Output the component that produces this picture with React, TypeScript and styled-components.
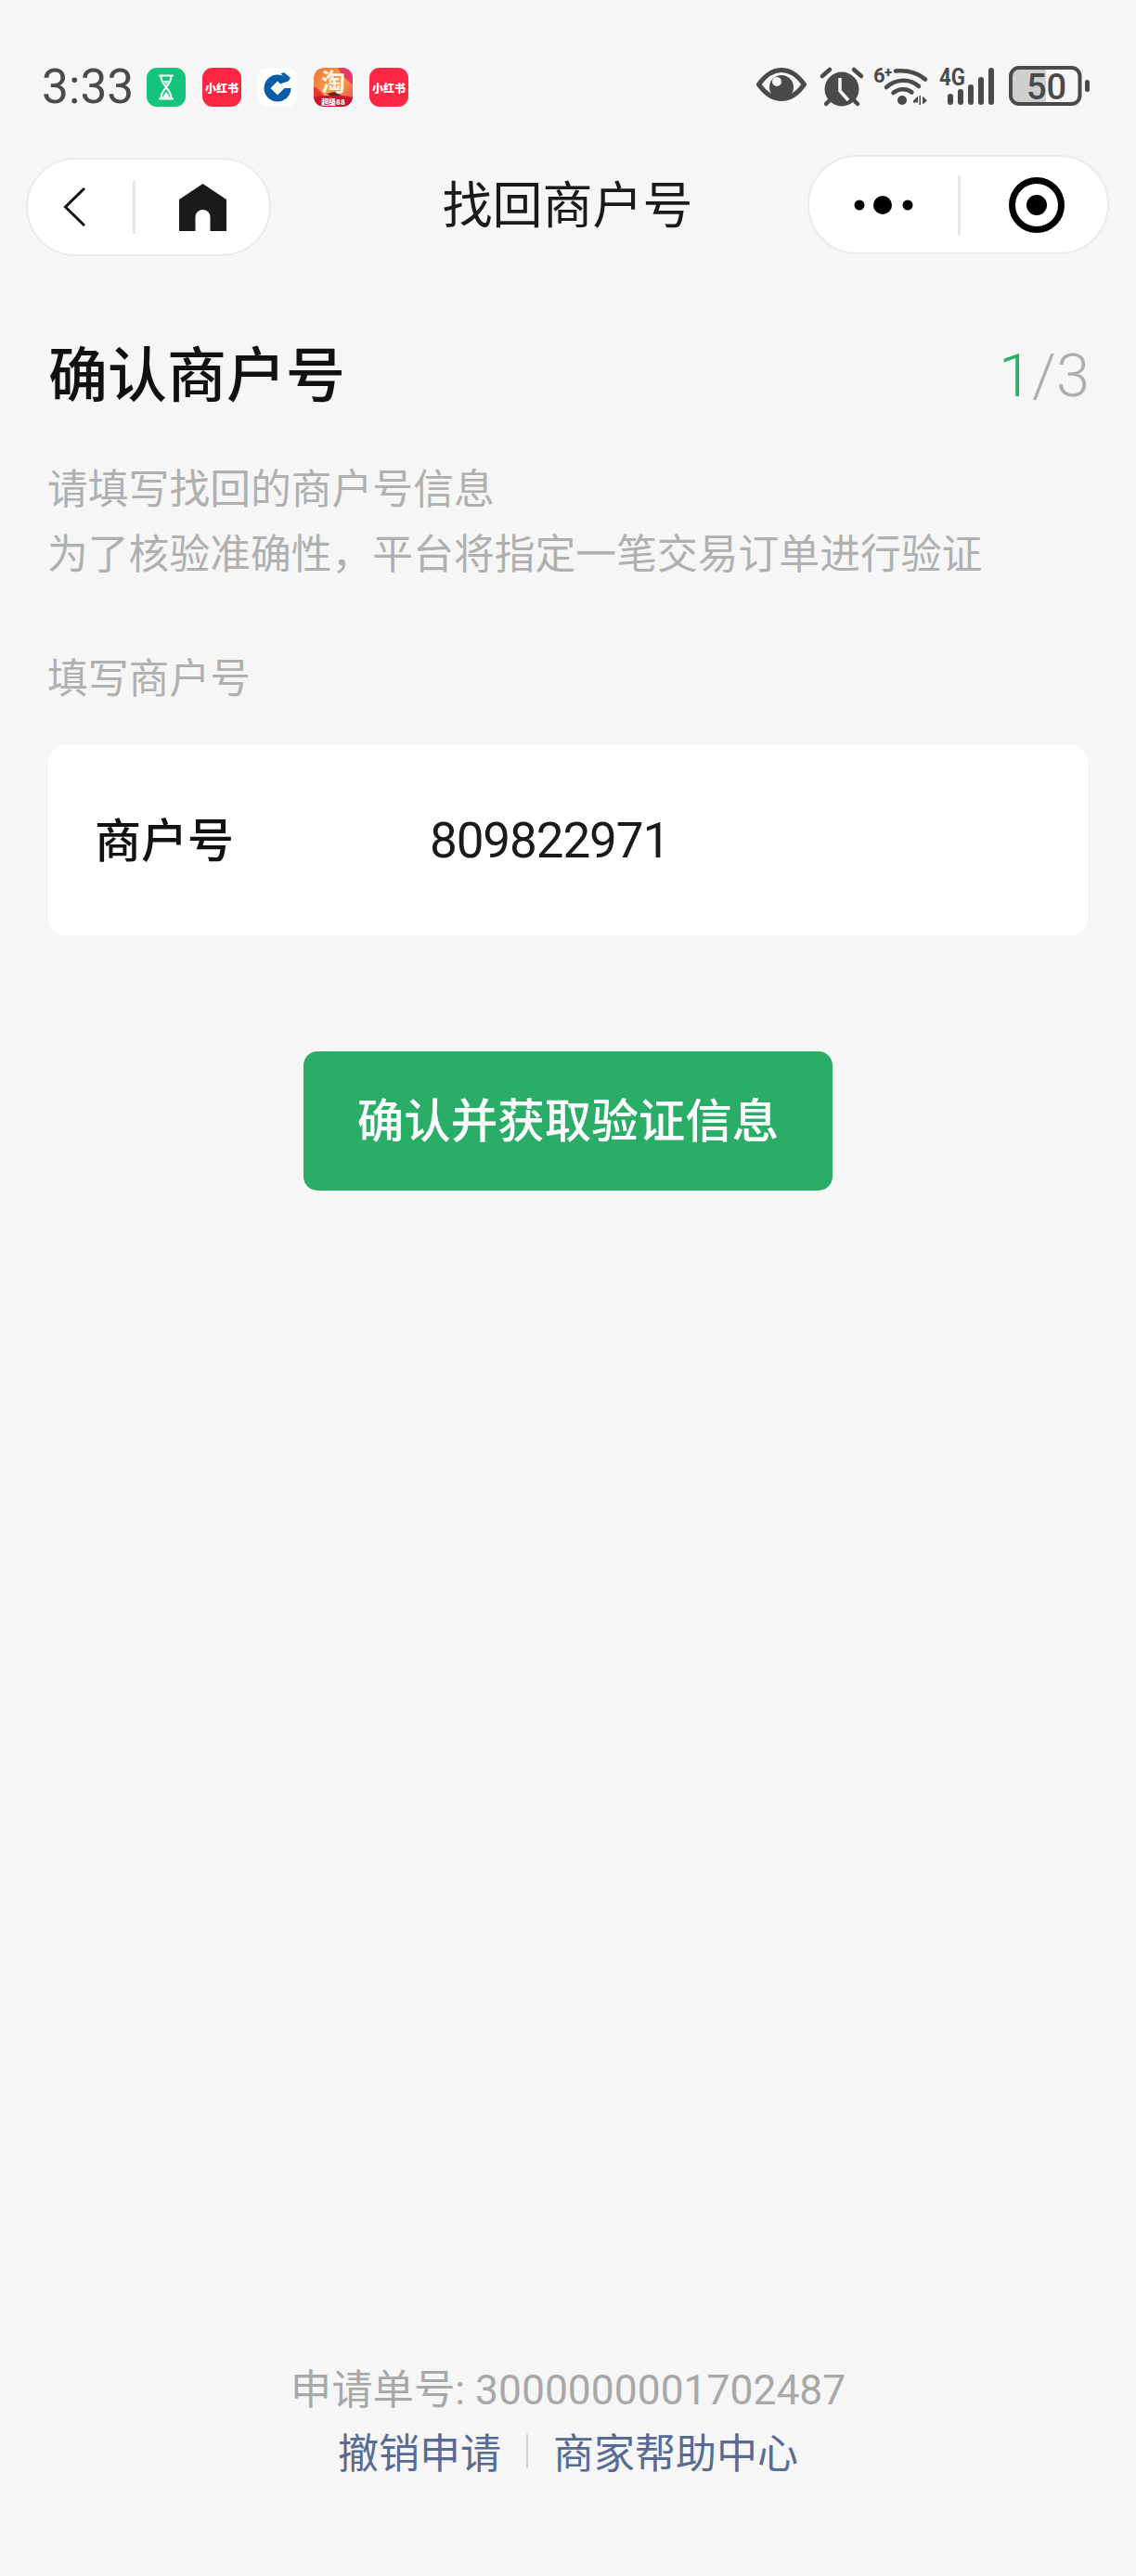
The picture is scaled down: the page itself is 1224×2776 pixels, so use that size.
import React from "react";
import styled, { createGlobalStyle } from "styled-components";

const CN = `"Noto Sans CJK SC", "Noto Sans", sans-serif`;

const Global = createGlobalStyle`
  html, body { margin: 0; padding: 0; background: #f6f6f6; }
  body { font-family: ${CN}; }
`;

const Page = styled.div`
  width: 1224px;
  height: 2776px;
  background: #f6f6f6;
  display: flex;
  flex-direction: column;
  overflow: hidden;
`;

const StatusBar = styled.div`
  height: 48px;
  margin-top: 70px;
  padding: 0 48px 0 45px;
  display: flex;
  align-items: center;
  justify-content: space-between;
`;

const StatusLeft = styled.div`
  display: flex;
  align-items: center;
`;

const Clock = styled.span`
  font-family: "Roboto", sans-serif;
  font-size: 51.5px;
  line-height: 48px;
  color: #4a4a4a;
  width: 113px;
`;

const AppIcons = styled.div`
  display: flex;
  gap: 18px;
  align-items: center;
`;

const AppIcon = styled.div<{ $bg: string }>`
  width: 42px;
  height: 42px;
  border-radius: 11px;
  background: ${(p) => p.$bg};
  color: #fff;
  font-size: 12px;
  font-weight: 900;
  display: flex;
  align-items: center;
  justify-content: center;
  overflow: hidden;
  white-space: nowrap;
`;

const NavBar = styled.div`
  height: 109px;
  margin-top: 49px;
  padding: 0 29px 0 28px;
  display: grid;
  grid-template-columns: 1fr auto 1fr;
  align-items: center;
`;

const Capsule = styled.div<{ $w: number; $h: number; $side: "left" | "right" }>`
  width: ${(p) => p.$w}px;
  height: ${(p) => p.$h}px;
  box-sizing: border-box;
  background: #fff;
  border: 2px solid #ebebeb;
  border-radius: 54px;
  display: flex;
  align-items: center;
  justify-self: ${(p) => (p.$side === "left" ? "start" : "end")};
  align-self: ${(p) => (p.$side === "left" ? "end" : "start")};
`;

const FirstSlot = styled.div<{ $w: number; $pr: number }>`
  width: ${(p) => p.$w}px;
  padding-right: ${(p) => p.$pr}px;
  box-sizing: border-box;
  display: flex;
  align-items: center;
  justify-content: center;
`;

const LastSlot = styled.div<{ $pl: number }>`
  flex: 1;
  padding-left: ${(p) => p.$pl}px;
  display: flex;
  align-items: center;
  justify-content: center;
`;

const CapsuleLine = styled.div<{ $h: number }>`
  width: 3px;
  height: ${(p) => p.$h}px;
  background: #e6e6e6;
`;

const NavTitle = styled.div`
  font-size: 54px;
  line-height: 60px;
  padding-bottom: 7px;
  color: #1a1a1a;
`;

const Content = styled.div`
  flex: 1;
  padding: 0 52px;
  display: flex;
  flex-direction: column;
`;

const HeadRow = styled.div`
  margin-top: 83px;
  display: flex;
  justify-content: space-between;
  align-items: center;
  height: 84px;
`;

const Heading = styled.h1`
  margin: 0;
  padding-bottom: 3px;
  font-size: 64px;
  line-height: 81px;
  font-weight: 500;
  color: #111;
`;

const Steps = styled.div`
  font-family: "Roboto", sans-serif;
  font-size: 65px;
  font-weight: 300;
  padding-top: 8px;
  margin-right: -2px;
  color: #aeaeae;
`;

const StepNow = styled.span`
  color: #2aae67;
  font-weight: 300;
`;

const Intro = styled.p`
  margin: 46px 0 0 -1px;
  font-size: 43.8px;
  line-height: 70px;
  color: #b0b0b0;
`;

const FieldLabel = styled.div`
  margin: 69px 0 0 -1px;
  font-size: 43.8px;
  line-height: 60px;
  color: #b0b0b0;
`;

const Card = styled.div`
  margin-top: 45px;
  height: 205px;
  background: #fff;
  border-radius: 18px;
  padding: 0 50px;
  display: flex;
  align-items: center;
`;

const CardLabel = styled.div`
  width: 361px;
  padding-bottom: 8px;
  font-size: 50px;
  font-weight: 500;
  color: #111;
`;

const CardValue = styled.div`
  font-family: "Roboto", sans-serif;
  font-size: 53px;
  letter-spacing: -1.1px;
  color: #1a1a1a;
`;

const Submit = styled.button`
  align-self: center;
  margin-top: 125px;
  width: 570px;
  height: 150px;
  padding: 0 0 9px;
  border: none;
  border-radius: 15px;
  background: #2aae67;
  color: #fff;
  font-family: ${CN};
  font-size: 50.5px;
  font-weight: 500;
`;

const Footer = styled.div`
  margin-top: auto;
  margin-bottom: 102px;
  display: flex;
  flex-direction: column;
  align-items: center;
`;

const OrderNo = styled.div`
  font-size: 44.4px;
  line-height: 64px;
  color: #a8a8a8;
  font-family: "Roboto", ${CN};
`;

const Links = styled.div`
  display: flex;
  align-items: center;
  height: 66px;
`;

const FooterLink = styled.a`
  font-size: 44px;
  color: #576b95;
`;

const LinkSep = styled.div`
  width: 2px;
  height: 36px;
  margin: 0 27px;
  background: #cfcfcf;
`;

const Hourglass = () => (
  <svg width="18" height="28" viewBox="0 0 18 28" fill="none" stroke="#fff" strokeWidth="2" strokeLinecap="round">
    <path d="M2 1.5h14M2 26.500h14" />
    <path d="M3.500 2c0 6 3 8.500 5.500 12C6.500 17.500 3.500 20 3.500 26M14.500 2c0 6-3 8.500-5.500 12 2.500 3.500 5.500 6 5.500 12" />
    <path d="M6 7h6l-3 4zM4.500 25.500l4.500-6.500 4.500 6.500z" fill="#fff" stroke="none" />
  </svg>
);

const CcbLogo = () => (
  <svg width="42" height="42" viewBox="0 0 42 42">
    <circle cx="21" cy="22" r="14.5" fill="#0a5ba8" />
    <path d="M13.500 22 21 14.500 28.500 22 21 29.500z" fill="#fff" />
    <path d="M24 17.500 42 11v11H28z" fill="#fff" />
    <path d="M21 3 37 16l1-6-8-7z" fill="#fff" />
    <path d="M24.500 6.500 28 5l7 6-2 3z" fill="#0a5ba8" />
  </svg>
);

const TaobaoIcon = () => (
  <svg width="42" height="42" viewBox="0 0 42 42">
    <defs>
      <linearGradient id="tb" x1="0" y1="0" x2="1" y2="1">
        <stop offset="0" stopColor="#f2762c" />
        <stop offset="0.55" stopColor="#f4a04c" />
        <stop offset="1" stopColor="#e8405a" />
      </linearGradient>
    </defs>
    <rect width="42" height="42" rx="10" fill="url(#tb)" />
    <path d="M26 0h8c5 0 8 3 8 8v10C36 14 30 8 26 0z" fill="#e8386a" />
    <path d="M0 20c6 3 10 8 12 12H0z" fill="#e5392f" />
    <path d="M14 28l8-2 8 4-9 2z" fill="#5c2a1c" />
    <path d="M0 32c12-3 30-3 42 0 0 6-4 10-10 10H10C4 42 0 38 0 32z" fill="#d0112b" />
    <text x="21" y="25" fontSize="26" fontWeight="700" fill="#fff3e4" textAnchor="middle" fontFamily="Noto Sans CJK SC">淘</text>
    <text x="21" y="40" fontSize="8" fill="#fff" textAnchor="middle" fontFamily="Noto Sans CJK SC">超级88</text>
  </svg>
);

const SystemIcons = () => (
  <svg width="361" height="48" viewBox="815 70 361 48" fill="none">
    {/* eye */}
    <path d="M817.500 91C826 79 834 75.500 842 75.500S858 79 866.500 91C858 103 850 106.500 842 106.500S826 103 817.500 91z" stroke="#4a4a4a" strokeWidth="5" strokeLinejoin="round" />
    <circle cx="842" cy="94" r="13" fill="#4a4a4a" />
    <circle cx="837" cy="88" r="5" fill="#f6f6f6" />
    {/* alarm */}
    <circle cx="907" cy="96" r="18.500" fill="#4a4a4a" />
    <path d="M886 82l8-7M920 75l8 7M890 112l5-5M919 107l5 5" stroke="#4a4a4a" strokeWidth="4.500" strokeLinecap="round" />
    <path d="M905 84v14l9 10" stroke="#f6f6f6" strokeWidth="3.500" />
    {/* wifi */}
    <text x="941" y="89" fontSize="22" fontWeight="700" fill="#4a4a4a" fontFamily="Roboto">6</text>
    <text x="953" y="83" fontSize="15" fontWeight="900" fill="#4a4a4a" fontFamily="Roboto">+</text>
    <path d="M965 76.500c13-1 24 2 32 9M955 94c10-9 25-10 35-1M962.500 100c6-5 15-5 20-.5" stroke="#4a4a4a" strokeWidth="4.500" strokeLinecap="round" />
    <circle cx="972" cy="108" r="5" fill="#4a4a4a" />
    <path d="M984 108.500l5-5v7h-5zM990.500 103v10h1.500v-10zM994 103.500l5 5-5 4z" fill="#4a4a4a" />
    {/* signal */}
    <text x="1012" y="91.500" fontSize="25" fontWeight="700" fill="#4a4a4a" fontFamily="Roboto" textLength="28" lengthAdjust="spacingAndGlyphs">4G</text>
    <g stroke="#4a4a4a" strokeWidth="6" strokeLinecap="round">
      <path d="M1024 104v6M1035 99v11M1046 94v16M1057 86v24M1068 76v34" />
    </g>
    {/* battery */}
    <path d="M1095 73h32v39h-32c-4 0-6-2-6-6V79c0-4 2-6 6-6z" fill="#cfcfcf" />
    <rect x="1089" y="73" width="74.500" height="39" rx="9" stroke="#4a4a4a" strokeWidth="4" />
    <text x="1106" y="107" fontSize="38" fontWeight="500" fill="#4a4a4a" fontFamily="Roboto">50</text>
    <rect x="1169" y="86" width="5" height="13" rx="2.500" fill="#4a4a4a" />
  </svg>
);

const BackIcon = () => (
  <svg width="24" height="42" viewBox="0 0 24 42" fill="none">
    <path d="M23 1 2.500 21 23 41" stroke="#111" strokeWidth="3" />
  </svg>
);

const HomeIcon = () => (
  <svg width="51" height="51" viewBox="0 0 51 51">
    <path d="M25.500 0 51 17V51H33.500V36a8 8 0 0 0-16 0V51H0V17z" fill="#1a1a1a" />
  </svg>
);

const MoreIcon = () => (
  <svg width="64" height="20" viewBox="0 0 64 20">
    <circle cx="6" cy="10" r="5.500" fill="#000" />
    <circle cx="31" cy="10" r="10" fill="#000" />
    <circle cx="58" cy="10" r="5.500" fill="#000" />
  </svg>
);

const TargetIcon = () => (
  <svg width="60" height="60" viewBox="0 0 60 60" fill="none">
    <circle cx="30" cy="30" r="26.500" stroke="#000" strokeWidth="7" />
    <circle cx="30" cy="30" r="11" fill="#000" />
  </svg>
);

export default function App() {
  return (
    <Page>
      <Global />
      <StatusBar>
        <StatusLeft>
          <Clock>3:33</Clock>
          <AppIcons>
            <AppIcon $bg="#14c47c"><Hourglass /></AppIcon>
            <AppIcon $bg="#fb2743">小红书</AppIcon>
            <AppIcon $bg="#ffffff"><CcbLogo /></AppIcon>
            <AppIcon $bg="transparent"><TaobaoIcon /></AppIcon>
            <AppIcon $bg="#fb2743">小红书</AppIcon>
          </AppIcons>
        </StatusLeft>
        <SystemIcons />
      </StatusBar>
      <NavBar>
        <Capsule $w={264} $h={106} $side="left">
          <FirstSlot $w={113} $pr={14}><BackIcon /></FirstSlot>
          <CapsuleLine $h={57} />
          <LastSlot $pl={0}><HomeIcon /></LastSlot>
        </Capsule>
        <NavTitle>找回商户号</NavTitle>
        <Capsule $w={325} $h={107} $side="right">
          <FirstSlot $w={160} $pr={0}><MoreIcon /></FirstSlot>
          <CapsuleLine $h={64} />
          <LastSlot $pl={6}><TargetIcon /></LastSlot>
        </Capsule>
      </NavBar>
      <Content>
        <HeadRow>
          <Heading>确认商户号</Heading>
          <Steps><StepNow>1</StepNow>/3</Steps>
        </HeadRow>
        <Intro>
          请填写找回的商户号信息
          <br />
          为了核验准确性，平台将指定一笔交易订单进行验证
        </Intro>
        <FieldLabel>填写商户号</FieldLabel>
        <Card>
          <CardLabel>商户号</CardLabel>
          <CardValue>809822971</CardValue>
        </Card>
        <Submit>确认并获取验证信息</Submit>
        <Footer>
          <OrderNo>申请单号: 3000000001702487</OrderNo>
          <Links>
            <FooterLink>撤销申请</FooterLink>
            <LinkSep />
            <FooterLink>商家帮助中心</FooterLink>
          </Links>
        </Footer>
      </Content>
    </Page>
  );
}
